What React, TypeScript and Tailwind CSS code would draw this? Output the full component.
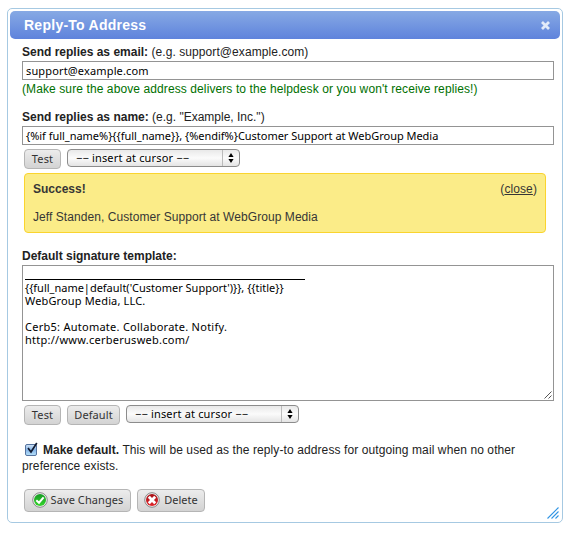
import type { ReactNode } from "react";

const lucida = "font-['Noto_Sans','Open_Sans',sans-serif]";

function Button({ children, className }: { children: ReactNode; className: string }) {
  return (
    <button
      type="button"
      className={`${lucida} flex shrink-0 items-center justify-center whitespace-nowrap rounded-[4px] border border-[#b5b5b5] bg-linear-to-b from-[#ececec] to-[#d3d3d3] text-[11px] leading-none text-[#333] ${className}`}
    >
      {children}
    </button>
  );
}

function CursorSelect() {
  return (
    <div
      className={`${lucida} flex h-[18px] w-[173px] shrink-0 items-center rounded-[4px] border border-[#8c8c8c] bg-linear-to-b from-[#e9e9e9] via-[#fbfbfb] to-[#e4e4e4] pl-2 text-[11px] leading-none text-black`}
    >
      <span className="flex-1 pb-0.5 whitespace-pre tracking-[0.17px]">−− insert at cursor −−</span>
      <span className="flex h-4 w-[17px] items-center justify-center border-l border-[#bbb]">
        <svg width="6" height="10" viewBox="0 0 6 10">
          <path d="M3 0L5.6 4H.4zM3 10L.4 6h5.2z" fill="#000" />
        </svg>
      </span>
    </div>
  );
}

function SaveIcon() {
  return (
    <svg className="mb-px" width="16" height="16" viewBox="0 0 16 16">
      <defs>
        <linearGradient id="green" x1="0" y1="0" x2="0" y2="1">
          <stop offset="0" stopColor="#159a25" />
          <stop offset="1" stopColor="#35d52b" />
        </linearGradient>
      </defs>
      <circle cx="8" cy="8" r="7.3" fill="#eee" stroke="#8a8a8a" />
      <circle cx="8" cy="8" r="6" fill="url(#green)" />
      <path d="M4.3 8.2L7 10.7 11.6 5.4" fill="none" stroke="#fff" strokeWidth="2" />
    </svg>
  );
}

function DeleteIcon() {
  return (
    <svg className="mb-px" width="16" height="16" viewBox="0 0 16 16">
      <defs>
        <linearGradient id="red" x1="0" y1="0" x2="0" y2="1">
          <stop offset="0" stopColor="#a50e14" />
          <stop offset="1" stopColor="#e0282c" />
        </linearGradient>
      </defs>
      <circle cx="8" cy="8" r="7.3" fill="#eee" stroke="#8a8a8a" />
      <circle cx="8" cy="8" r="6" fill="url(#red)" />
      <path d="M4.8 4.8L11.2 11.2M11.2 4.8L4.8 11.2" fill="none" stroke="#fff" strokeWidth="2.8" />
    </svg>
  );
}

function TextField({ children, className }: { children: ReactNode; className: string }) {
  return (
    <div className={`${lucida} h-[19px] w-[532px] border border-[#949494] bg-white pl-[3px] text-[11px] leading-[17px] whitespace-pre text-black ${className}`}>
      {children}
    </div>
  );
}

export default function App() {
  return (
    <div className="h-[534px] w-[570px] bg-white pt-2 pl-[7px] font-['Liberation_Sans',Arial,sans-serif] text-[12px] leading-4 text-[#222]">
      <div className="relative h-[515px] w-[556px] rounded-[5px] border border-[#a6c9e2] p-[2px]">
        <header className="flex h-7 items-center justify-between rounded-[5px] bg-linear-to-b from-[#87a9e4] to-[#5f83dc] pr-[10px] pl-[14px] text-white">
          <h1 className="text-[14px] font-bold tracking-[0.26px]">Reply-To Address</h1>
          <svg width="9" height="9" viewBox="0 0 9 9">
            <path d="M1 1L8 8M8 1L1 8" stroke="#e2eaf9" strokeWidth="2.8" />
          </svg>
        </header>

        <main className="flex w-[544px] flex-col pl-3">
          <div className="mt-[5px] h-[17px] whitespace-nowrap">
            <b>Send replies as email:</b> <span className="tracking-[0.08px]">(e.g. support@example.com)</span>
          </div>
          <TextField className="tracking-[0.15px]">support@example.com</TextField>
          <div className="mt-[1px] h-[28px] whitespace-nowrap tracking-[0.1px] text-[#007000]">
            (Make sure the above address delivers to the helpdesk or you won't receive replies!)
          </div>
          <div className="h-[17px] whitespace-nowrap">
            <b>Send replies as name:</b> (e.g. "Example, Inc.")
          </div>
          <TextField className="tracking-[-0.025px]">{"{%if full_name%}{{full_name}}, {%endif%}Customer Support at WebGroup Media"}</TextField>

          <div className="mt-1 ml-0.5 flex h-6 items-start gap-[6px]">
            <Button className="h-5 w-[37px] pb-px tracking-[0.2px]">Test</Button>
            <CursorSelect />
          </div>

          <section className="ml-0.5 h-[60px] w-[522px] rounded-[4px] border border-[#fad42e] bg-[#fbec88] pt-[7px] pr-[8px] pl-2 text-[#363636]">
            <div className="flex justify-between">
              <b>Success!</b>
              <span className="tracking-[0.1px]">(<a className="underline">close</a>)</span>
            </div>
            <p className="mt-3 tracking-[0.065px]">Jeff Standen, Customer Support at WebGroup Media</p>
          </section>

          <div className="mt-[15px] h-[17px] font-bold">Default signature template:</div>
          <div className={`${lucida} relative h-[136px] w-[532px] border border-[#949494] bg-white pt-[2px] pl-[2px] text-[11px] leading-[13px] text-black`}>
            <div className="h-[13px] pt-[11px]">
              <div className="h-px w-[280px] bg-black" />
            </div>
            <div className="whitespace-pre">
              <span className="tracking-[-0.01px]">{"{{full_name|default('Customer Support')}}, {{title}}\n"}</span>
              <span className="tracking-[0.15px]">{"WebGroup Media, LLC.\n\n"}</span>
              <span className="tracking-[0.26px]">{"Cerb5: Automate. Collaborate. Notify.\nhttp://www.cerberusweb.com/"}</span>
            </div>
            <svg className="absolute right-px bottom-px" width="8" height="8" viewBox="0 0 8 8">
              <path d="M.5 7.5l7-7M4.5 7.5l3-3" stroke="#555" />
            </svg>
          </div>

          <div className="mt-1 ml-0.5 flex h-[37px] items-start gap-[6px]">
            <Button className="h-5 w-[37px] pb-px tracking-[0.2px]">Test</Button>
            <Button className="h-5 w-[53px] pb-px tracking-[0.1px]">Default</Button>
            <CursorSelect />
          </div>

          <label className="block h-8 whitespace-nowrap">
            <svg className="mr-[5px] ml-[3px] inline-block align-[-3px]" width="13" height="15" viewBox="0 0 13 15">
              <defs>
                <linearGradient id="check" x1="0" y1="0" x2="0" y2="1">
                  <stop offset="0" stopColor="#d2e4f6" />
                  <stop offset=".5" stopColor="#86b5e8" />
                  <stop offset="1" stopColor="#b8e2fa" />
                </linearGradient>
              </defs>
              <rect x=".5" y="2.5" width="11" height="11" rx="1.5" fill="url(#check)" stroke="#55739f" />
              <path d="M3 6L6 10 11.8 1" fill="none" stroke="#111a30" strokeWidth="1.7" />
            </svg>
            <b>Make default.</b>{" "}
            <span className="tracking-[0.1px]">
              This will be used as the reply-to address for outgoing mail when no other
              <br />
              preference exists.
            </span>
          </label>

          <div className="mt-[15px] ml-0.5 flex gap-[6px]">
            <Button className="h-[23px] w-[107px] gap-[3px] tracking-[0.08px]"><SaveIcon /><span className="pb-[3px]">Save Changes</span></Button>
            <Button className="h-[23px] w-[68px] gap-[4px]"><DeleteIcon /><span className="pb-[3px]">Delete</span></Button>
          </div>
        </main>

        <svg className="absolute right-[3px] bottom-[3px]" width="12" height="12" viewBox="0 0 12 12">
          <path d="M.5 11.5l11-11M4.5 11.5l7-7M8.5 11.5l3-3" stroke="#3295e4" strokeWidth="1.1" />
        </svg>
      </div>
    </div>
  );
}
